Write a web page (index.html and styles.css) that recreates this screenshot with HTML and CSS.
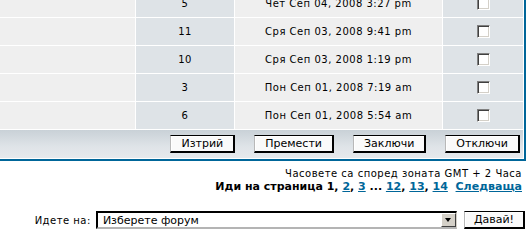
FILE: index.html
```html
<!DOCTYPE html>
<html lang="bg">
<head>
  <meta charset="UTF-8" />
  <meta name="viewport" content="width=device-width, initial-scale=1.0" />
  <title>Модераторски контролен панел</title>
  <link rel="stylesheet" href="styles.css">
</head>
<body>
  <form class="modcp">
    <table class="forumline">
      <colgroup>
        <col class="c-topic">
        <col class="c-replies">
        <col class="c-last">
        <col class="c-select">
      </colgroup>
      <tr>
        <td class="row1"></td>
        <td class="row2 gensmall">5</td>
        <td class="row1 gensmall">Чет Сеп 04, 2008 3:27 pm</td>
        <td class="row2"><input type="checkbox" class="mark" /></td>
      </tr>
      <tr>
        <td class="row1"></td>
        <td class="row2 gensmall">11</td>
        <td class="row1 gensmall">Сря Сеп 03, 2008 9:41 pm</td>
        <td class="row2"><input type="checkbox" class="mark" /></td>
      </tr>
      <tr>
        <td class="row1"></td>
        <td class="row2 gensmall">10</td>
        <td class="row1 gensmall">Сря Сеп 03, 2008 1:19 pm</td>
        <td class="row2"><input type="checkbox" class="mark" /></td>
      </tr>
      <tr>
        <td class="row1"></td>
        <td class="row2 gensmall">3</td>
        <td class="row1 gensmall">Пон Сеп 01, 2008 7:19 am</td>
        <td class="row2"><input type="checkbox" class="mark" /></td>
      </tr>
      <tr>
        <td class="row1"></td>
        <td class="row2 gensmall">6</td>
        <td class="row1 gensmall">Пон Сеп 01, 2008 5:54 am</td>
        <td class="row2"><input type="checkbox" class="mark" /></td>
      </tr>
      <tr>
        <td class="catBottom" colspan="4">
          <div class="actions">
            <input type="submit" class="liteoption" value="Изтрий" />
            <input type="submit" class="liteoption" value="Премести" />
            <input type="submit" class="liteoption" value="Заключи" />
            <input type="submit" class="liteoption" value="Отключи" />
          </div>
        </td>
      </tr>
    </table>
  </form>

  <div class="pageinfo">
    <span class="gensmall">Часовете са според зоната GMT + 2 Часа</span>
    <span class="nav">Иди на страница 1, <a href="#">2</a>, <a href="#">3</a> ... <a href="#">12</a>, <a href="#">13</a>, <a href="#">14</a>&nbsp;&nbsp;<a href="#">Следваща</a></span>
  </div>

  <form class="jumpbox">
    <label class="gensmall" for="forum">Идете на:</label>
    <span class="selectbox">
      <select id="forum">
        <option>Изберете форум</option>
      </select>
      <span class="arrow"></span>
    </span>
    <input type="submit" class="liteoption go" value="Давай!" />
  </form>
</body>
</html>
```

FILE: styles.css
```css
body {
  margin: 0;
  background-color: #fff;
  color: #000;
  font-family: "DejaVu Sans", Verdana, sans-serif;
}

.gensmall {
  font-size: 10px;
  letter-spacing: 0.5px;
}

.forumline {
  margin: -13px 0 0 -60px;
  width: 586px;
  table-layout: fixed;
  border: 2px solid #006699;
  border-spacing: 1px;
  background-color: #fff;
}

.c-topic { width: 192px; }
.c-replies { width: 98px; }
.c-last { width: 207px; }
.c-select { width: 80px; }

td {
  padding: 0;
  height: 27px;
  text-align: center;
  vertical-align: middle;
}

.row1 {
  background-color: #efefef;
}

.row2 {
  background-color: #dee3e7;
}

.mark {
  appearance: none;
  display: block;
  width: 13px;
  height: 13px;
  margin: 0 auto;
  background: #fff;
  border: 1px solid;
  border-color: #808080 #fff #fff #808080;
  box-shadow: inset 1px 1px #404040, inset -1px -1px #d4d0c8;
}

.catBottom {
  height: 28px;
  background: linear-gradient(#c9d1d7, #dfe4e8 60%, #e6e9ec);
}

.actions {
  display: flex;
  justify-content: flex-end;
  gap: 19px;
  padding-right: 3px;
}

.liteoption {
  height: 18px;
  padding: 0 10px;
  font-family: "DejaVu Sans", Verdana, sans-serif;
  font-size: 11px;
  color: #000;
  background-color: #fafafa;
  border-style: solid;
  border-width: 1px 2px 2px 1px;
  border-color: #000 #000 #000 #b8b8b8;
  box-shadow: inset 1px 1px #fff;
}

.go {
  padding: 0 9px;
}

.pageinfo {
  display: flex;
  flex-direction: column;
  align-items: flex-end;
  margin-top: 6px;
  padding-right: 9px;
  line-height: 13px;
}

.nav {
  font-size: 11px;
  font-weight: bold;
}

.nav a {
  color: #006699;
}

.jumpbox {
  display: flex;
  justify-content: flex-end;
  align-items: center;
  margin-top: 18px;
  padding-right: 6px;
}

.jumpbox label {
  margin-right: 5px;
}

.selectbox {
  position: relative;
  margin-right: 7px;
}

.selectbox select {
  appearance: none;
  display: block;
  width: 361px;
  height: 18px;
  padding: 0 0 0 5px;
  font-family: "DejaVu Sans", Verdana, sans-serif;
  font-size: 11px;
  color: #000;
  background-color: #fff;
  border-style: solid;
  border-width: 2px 1px 2px 2px;
  border-color: #000 #d4d0c8 #b4b4b4 #000;
  border-radius: 0;
}

.arrow {
  position: absolute;
  top: 2px;
  right: 1px;
  width: 13px;
  height: 12px;
  background-color: #d4d0c8;
  border: 1px solid;
  border-color: #fff #404040 #404040 #fff;
}

.arrow::after {
  content: "";
  position: absolute;
  left: 3px;
  top: 4px;
  border-style: solid;
  border-width: 4px 3.5px 0 3.5px;
  border-color: #000 transparent transparent transparent;
}
```
